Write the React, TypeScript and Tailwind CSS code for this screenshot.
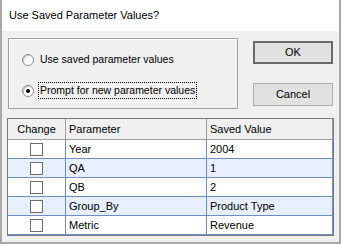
const rows = [
  { name: "Year", value: "2004" },
  { name: "QA", value: "1" },
  { name: "QB", value: "2" },
  { name: "Group_By", value: "Product Type" },
  { name: "Metric", value: "Revenue" },
];

function Radio({ checked }: { checked?: boolean }) {
  return (
    <span className="relative flex h-[12px] w-[12px] shrink-0 items-center justify-center rounded-full border border-[#8a8a8a] bg-white shadow-[inset_1px_1px_0_#c8c8c8]">
      {checked && <span className="h-[4px] w-[4px] rounded-full bg-black" />}
    </span>
  );
}

function Checkbox() {
  return <span className="block h-[13px] w-[13px] border border-[#6e6e6e] bg-white" />;
}

export default function App() {
  return (
    <div
      className="flex h-[244px] w-[341px] flex-col border-x-2 border-b-2 border-[#a8a8a8] bg-[#f0f0f0] text-[11px] text-black"
      style={{ fontFamily: '"Liberation Sans", Arial, sans-serif' }}
    >
      <div className="flex h-[31px] items-center bg-white pl-[7px] text-[11px]">Use Saved Parameter Values?</div>

      <div className="flex pt-[7px] pl-[6px]">
        <div className="flex h-[71px] w-[230px] flex-col border border-[#a0a0a0] text-[10.5px] shadow-[inset_1px_1px_0_#fff]">
          <div className="mt-[12px] flex h-[17px] items-center pl-[13px]">
            <Radio />
            <span className="ml-[5px] px-[1px]">Use saved parameter values</span>
          </div>
          <div className="mt-[14px] flex h-[17px] items-center pl-[13px]">
            <Radio checked />
            <span className="ml-[4px] flex h-[17px] items-center border border-dotted border-black px-[1px]">
              Prompt for new parameter values
            </span>
          </div>
        </div>

        <div className="ml-[15px] flex flex-col pt-[3px]">
          <button className="flex h-[23px] w-[80px] items-center justify-center border-2 border-[#6a6a6a] bg-[#e1e1e1] text-[11px]">
            OK
          </button>
          <button className="mt-[19px] flex h-[23px] w-[80px] items-center justify-center border border-[#adadad] bg-[#e1e1e1] text-[11px]">
            Cancel
          </button>
        </div>
      </div>

      <div className="mt-[9px] ml-[5px] w-[327px] border border-[#7a7a7a] bg-white">
        <div className="flex h-[21px] bg-[#f0f0f0]">
          <div className="flex w-[58px] items-center justify-center border-r border-b border-[#a0a0a0]">Change</div>
          <div className="flex w-[141px] items-center border-r border-b border-[#a0a0a0] pl-[3px]">Parameter</div>
          <div className="flex flex-1 items-center border-r border-b border-[#a0a0a0] pl-[3px]">Saved Value</div>
        </div>
        {rows.map((row, i) => (
          <div key={row.name} className={`flex h-[19px] ${i % 2 === 1 ? "bg-[#e6effb]" : "bg-white"}`}>
            <div className="flex w-[58px] items-center justify-center border-r border-b border-[#6f8dcb]">
              <Checkbox />
            </div>
            <div className="flex w-[141px] items-center border-r border-b border-[#6f8dcb] pl-[3px]">{row.name}</div>
            <div className="flex flex-1 items-center border-r border-b border-[#6f8dcb] pl-[3px]">{row.value}</div>
          </div>
        ))}
      </div>
    </div>
  );
}
